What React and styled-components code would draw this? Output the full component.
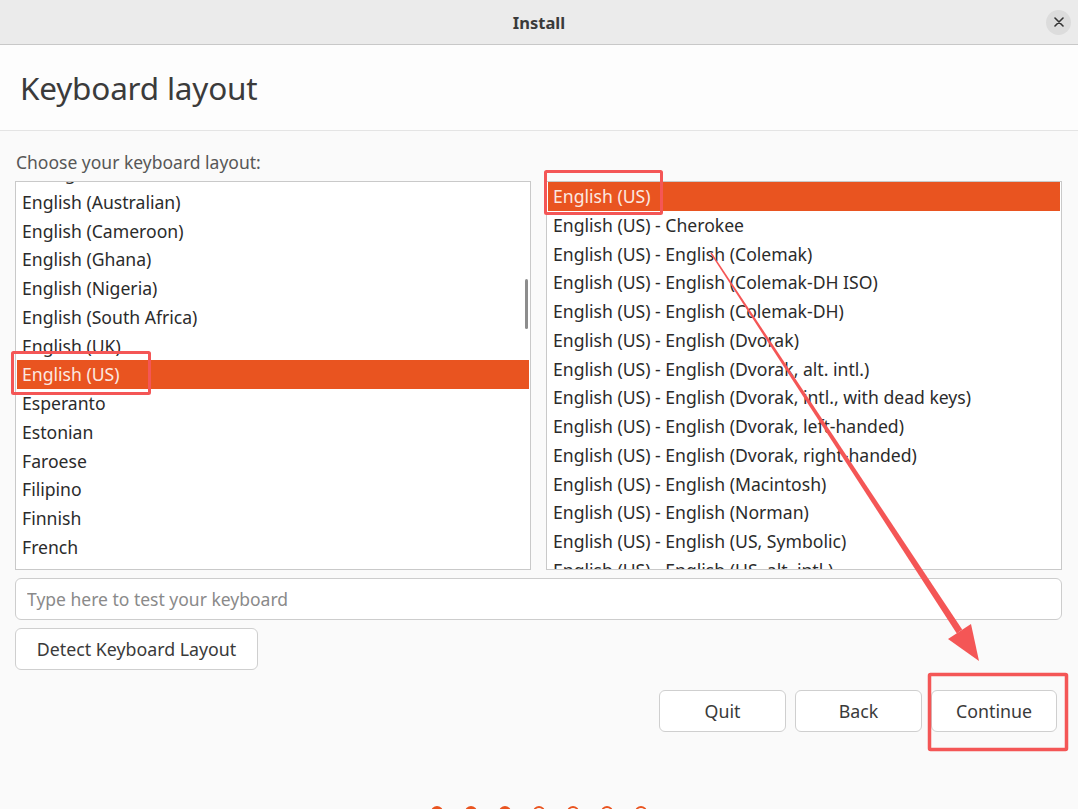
import React, { useLayoutEffect, useRef } from "react";
import styled, { createGlobalStyle } from "styled-components";

const Global = createGlobalStyle`
  html, body { margin: 0; padding: 0; background: #fafafa; overflow: hidden; }
  * { box-sizing: border-box; }
  body { font-family: "Noto Sans", "Open Sans", sans-serif; }
`;

const Window = styled.div`
  position: relative;
  width: 1078px;
  height: 809px;
  overflow: hidden;
  display: flex;
  flex-direction: column;
  background: #fafafa;
  color: #2f2f2f;
`;

const TitleBar = styled.header`
  height: 45px;
  flex: none;
  display: grid;
  grid-template-columns: 1fr auto 1fr;
  align-items: center;
  background: #ebebeb;
  border-bottom: 1px solid #c8c8c8;
`;

const Title = styled.div`
  grid-column: 2;
  font-size: 16.5px;
  font-weight: 700;
  color: #3a3a3a;
`;

const CloseButton = styled.button`
  grid-column: 3;
  justify-self: end;
  margin-right: 7px;
  width: 25px;
  height: 25px;
  border-radius: 50%;
  border: none;
  background: #dcdcdc;
  display: grid;
  place-items: center;
  padding: 0;
`;

const Header = styled.div`
  height: 86px;
  flex: none;
  display: flex;
  align-items: center;
  padding-left: 20px;
  background: #fdfdfd;
  border-bottom: 1px solid #e4e4e4;
`;

const Heading = styled.h1`
  margin: 0;
  font-size: 31.5px;
  font-weight: 400;
  color: #3b3b3b;
  letter-spacing: -0.2px;
`;

const Body = styled.main`
  flex: 1;
  display: flex;
  flex-direction: column;
  padding: 20px 16px 0 15px;
`;

const Label = styled.div`
  height: 22px;
  line-height: 22px;
  padding-left: 1px;
  font-size: 17.5px;
  color: #575757;
  margin-bottom: 8px;
`;

const Lists = styled.div`
  display: grid;
  grid-template-columns: 516px 516px;
  column-gap: 15px;
  height: 389px;
`;

const ListBox = styled.div`
  position: relative;
  border: 1px solid #c9c9c9;
  background: #ffffff;
  overflow: hidden;
`;

const Scroller = styled.div`
  height: 100%;
  overflow-y: scroll;
  scrollbar-width: none;
  padding: 0 1px;
  &::-webkit-scrollbar { display: none; }
`;

const Row = styled.div`
  height: 28.75px;
  line-height: 28.75px;
  padding-left: 5px;
  font-size: 17.6px;
  white-space: nowrap;
  color: ${(p) => (p.$selected ? "#fbe9e1" : "#2b2b2b")};
  background: ${(p) => (p.$selected ? "#e95420" : "transparent")};
`;

const ScrollThumb = styled.div`
  position: absolute;
  right: 2px;
  top: 97px;
  width: 3px;
  height: 50px;
  border-radius: 2px;
  background: #8d8d8d;
`;

const TestInput = styled.input`
  margin-top: 8px;
  height: 42px;
  width: 100%;
  border: 1px solid #cdcdcd;
  border-radius: 6px;
  background: #ffffff;
  padding: 0 11px;
  font-family: inherit;
  font-size: 17.5px;
  color: #333;
  &::placeholder { color: #8a8a8a; }
`;

const Button = styled.button`
  height: 42px;
  width: ${(p) => p.$w}px;
  border: 1px solid #cfcfcf;
  border-radius: 6px;
  background: #ffffff;
  font-family: inherit;
  font-size: 17.8px;
  color: #3a3a3a;
  padding: 0;
`;

const DetectRow = styled.div`
  margin-top: 8px;
  display: flex;
`;

const Actions = styled.div`
  margin-top: 20px;
  display: flex;
  justify-content: flex-end;
  gap: 9px;
  padding-right: 5px;
`;

const Dots = styled.div`
  margin-top: 74px;
  display: flex;
  justify-content: center;
  gap: 22px;
  padding-left: 1px;
`;

const Dot = styled.span`
  width: 12px;
  height: 12px;
  border-radius: 50%;
  border: 2px solid #e95420;
  background: ${(p) => (p.$filled ? "#e95420" : "transparent")};
`;

const Overlay = styled.svg`
  position: absolute;
  left: 0;
  top: 0;
  width: 1078px;
  height: 809px;
  pointer-events: none;
`;

const leftItems = [
  "Danish",
  "Dari",
  "Dhivehi",
  "Dutch",
  "Dzongkha",
  "English (Australian)",
  "English (Cameroon)",
  "English (Ghana)",
  "English (Nigeria)",
  "English (South Africa)",
  "English (UK)",
  "English (US)",
  "Esperanto",
  "Estonian",
  "Faroese",
  "Filipino",
  "Finnish",
  "French",
  "French (Canada)",
  "French (Democratic Republic of the Congo)",
  "French (Togo)",
  "Friulian",
  "Georgian",
  "German",
];

const rightItems = [
  "English (US)",
  "English (US) - Cherokee",
  "English (US) - English (Colemak)",
  "English (US) - English (Colemak-DH ISO)",
  "English (US) - English (Colemak-DH)",
  "English (US) - English (Dvorak)",
  "English (US) - English (Dvorak, alt. intl.)",
  "English (US) - English (Dvorak, intl., with dead keys)",
  "English (US) - English (Dvorak, left-handed)",
  "English (US) - English (Dvorak, right-handed)",
  "English (US) - English (Macintosh)",
  "English (US) - English (Norman)",
  "English (US) - English (US, Symbolic)",
  "English (US) - English (US, alt. intl.)",
  "English (US) - English (US, euro on 5)",
];

function LayoutList({ items, selected, scrollTop = 0, thumb }) {
  const ref = useRef(null);
  useLayoutEffect(() => {
    if (ref.current) ref.current.scrollTop = scrollTop;
  }, [scrollTop]);
  return (
    <ListBox>
      <Scroller ref={ref}>
        {items.map((it) => (
          <Row key={it} $selected={it === selected}>
            {it}
          </Row>
        ))}
      </Scroller>
      {thumb && <ScrollThumb />}
    </ListBox>
  );
}

export default function App() {
  const red = "#f45656";
  return (
    <>
      <Global />
      <Window>
        <TitleBar>
          <Title>Install</Title>
          <CloseButton aria-label="Close">
            <svg width="10" height="10" viewBox="0 0 10 10">
              <path d="M1 1 L9 9 M9 1 L1 9" stroke="#333" strokeWidth="1.6" strokeLinecap="round" />
            </svg>
          </CloseButton>
        </TitleBar>
        <Header>
          <Heading>Keyboard layout</Heading>
        </Header>
        <Body>
          <Label>Choose your keyboard layout:</Label>
          <Lists>
            <LayoutList items={leftItems} selected="English (US)" scrollTop={138} thumb />
            <LayoutList items={rightItems} selected="English (US)" />
          </Lists>
          <TestInput placeholder="Type here to test your keyboard" />
          <DetectRow>
            <Button $w={243}>Detect Keyboard Layout</Button>
          </DetectRow>
          <Actions>
            <Button $w={127}>Quit</Button>
            <Button $w={127}>Back</Button>
            <Button $w={126}>Continue</Button>
          </Actions>
          <Dots>
            {Array.from({ length: 7 }).map((_, i) => (
              <Dot key={i} $filled={i < 3} />
            ))}
          </Dots>
        </Body>
        <Overlay viewBox="0 0 1078 809">
          <rect x="12.5" y="352.5" width="137" height="41" fill="none" stroke={red} strokeWidth="3" rx="1" />
          <rect x="545.5" y="171.5" width="116" height="42" fill="none" stroke={red} strokeWidth="3" rx="1" />
          <rect x="929.5" y="674.5" width="137" height="75" fill="none" stroke={red} strokeWidth="3.5" rx="1" />
          <polygon points="711.6,252.6 710.4,253.4 956.8,633.4 962.2,629.6" fill={red} />
          <polygon points="979,661 948,639 971,624" fill={red} />
        </Overlay>
      </Window>
    </>
  );
}
